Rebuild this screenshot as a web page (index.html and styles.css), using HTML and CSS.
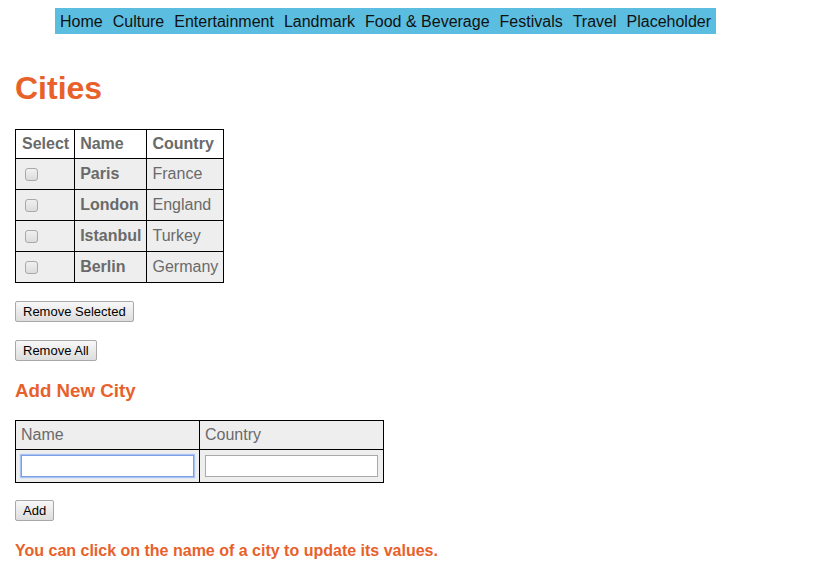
FILE: index.html
```html
<!DOCTYPE html>
<html>
<head>
<meta charset="utf-8">
<title>Cities</title>
<link rel="stylesheet" href="styles.css">
</head>
<body>
<nav class="topnav">
  <ul class="menu">
    <li>Home</li>
    <li>Culture</li>
    <li>Entertainment</li>
    <li>Landmark</li>
    <li>Food &amp; Beverage</li>
    <li>Festivals</li>
    <li>Travel</li>
    <li>Placeholder</li>
  </ul>
</nav>
<main class="content">
  <h1 class="title">Cities</h1>
  <table class="cities">
    <tr class="head"><th class="sel">Select</th><th>Name</th><th>Country</th></tr>
    <tr><td class="sel"><input type="checkbox" class="check"></td><td class="name">Paris</td><td>France</td></tr>
    <tr><td class="sel"><input type="checkbox" class="check"></td><td class="name">London</td><td>England</td></tr>
    <tr><td class="sel"><input type="checkbox" class="check"></td><td class="name">Istanbul</td><td>Turkey</td></tr>
    <tr><td class="sel"><input type="checkbox" class="check"></td><td class="name">Berlin</td><td>Germany</td></tr>
  </table>
  <div class="btnrow first"><button class="btn">Remove Selected</button></div>
  <div class="btnrow"><button class="btn">Remove All</button></div>
  <h3 class="subtitle">Add New City</h3>
  <table class="addform">
    <tr class="head"><td>Name</td><td>Country</td></tr>
    <tr class="inrow"><td><input type="text" class="field focus"></td><td><input type="text" class="field"></td></tr>
  </table>
  <div class="btnrow add"><button class="btn">Add</button></div>
  <p class="note">You can click on the name of a city to update its values.</p>
</main>
</body>
</html>
```
FILE: styles.css
```css
html, body {
  margin: 0;
  padding: 0;
  background: #fff;
  font-family: "Liberation Sans", Arial, sans-serif;
  font-size: 16px;
}

.topnav {
  margin: 8px 0 0 55px;
  display: flex;
}

.menu {
  list-style: none;
  margin: 0;
  padding: 0;
  display: flex;
  background: #5bbde0;
}

.menu li {
  padding: 5px 5px 3px;
  line-height: 18px;
  color: #111;
}

.content {
  padding-left: 15px;
}

.title {
  margin: 36px 0 0;
  font-size: 32px;
  line-height: 37px;
  font-weight: bold;
  color: #e8612b;
}

.cities {
  margin-top: 22px;
  border-collapse: collapse;
  color: #6a6a6a;
}

.cities th,
.cities td {
  border: 1px solid #000;
  padding: 0 5px;
  text-align: left;
  line-height: 18px;
  vertical-align: middle;
}

.cities .sel {
  padding-left: 6px;
}

.cities th {
  font-weight: bold;
  background: #fff;
  height: 28px;
}

.cities td {
  background: #eeeeee;
  height: 30px;
}

.cities td.name {
  font-weight: bold;
}

.check {
  appearance: none;
  -webkit-appearance: none;
  width: 13px;
  height: 13px;
  margin: 0 0 0 3px;
  border: 1px solid #a9a9a9;
  border-radius: 3px;
  background: linear-gradient(#f0f0f0, #dcdcdc);
  display: block;
}

.btnrow {
  margin-top: 18px;
  display: flex;
}

.btn {
  box-sizing: border-box;
  font-family: "Liberation Sans", Arial, sans-serif;
  font-size: 13px;
  line-height: 15px;
  height: 21px;
  padding: 1px 7px;
  color: #000;
  border: 1px solid #a8a8a8;
  border-radius: 2px;
  background: linear-gradient(#f8f8f8, #dddddd);
}

.subtitle {
  margin: 19px 0 0;
  font-size: 18.72px;
  line-height: 22px;
  font-weight: bold;
  color: #e8612b;
}

.addform {
  margin-top: 18px;
  border-collapse: collapse;
  width: 369px;
  color: #6a6a6a;
}

.addform td {
  border: 1px solid #000;
  background: #eeeeee;
  padding: 0 5px;
  line-height: 18px;
  width: 50%;
  height: 28px;
  vertical-align: middle;
}

.addform .inrow td {
  height: 32px;
}

.field {
  box-sizing: border-box;
  display: block;
  width: 173px;
  height: 22px;
  margin: 0;
  border: 1px solid #a9a9a9;
  background: #fff;
  font-family: "Liberation Sans", Arial, sans-serif;
  font-size: 13px;
}

.field.focus {
  border: 1px solid #7c9fe3;
  box-shadow: 0 0 1px 1px #a8c4f5;
  outline: none;
}

.btnrow.add {
  margin-top: 17px;
}

.note {
  margin: 21px 0 0;
  font-weight: bold;
  font-size: 16px;
  line-height: 18px;
  color: #e8612b;
}
```
